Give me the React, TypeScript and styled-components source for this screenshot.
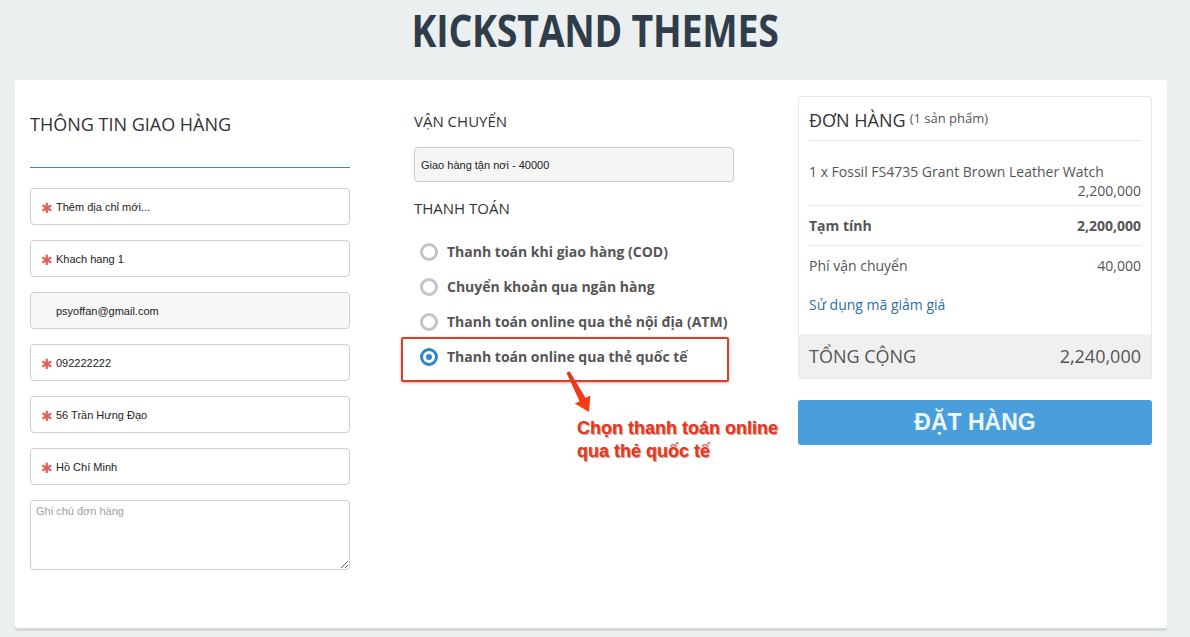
import React from "react";
import styled, { createGlobalStyle } from "styled-components";

const Global = createGlobalStyle`
  * { box-sizing: border-box; }
  html, body { margin: 0; padding: 0; background: #ebeff0; }
  body { font-family: "Open Sans", "Noto Sans", sans-serif; color: #333; }
`;

const Page = styled.div`
  width: 1190px;
  height: 637px;
  overflow: hidden;
`;

const Header = styled.header`
  height: 80px;
  display: flex;
  justify-content: center;
  align-items: flex-start;
`;

const Title = styled.h1`
  margin: 8px 0 0;
  font-family: "Open Sans", sans-serif;
  font-weight: 700;
  font-size: 44px;
  line-height: 44px;
  color: #2f3d4a;
  letter-spacing: -0.3px;
  white-space: nowrap;
  transform: scaleX(0.853);
`;

const Panel = styled.main`
  width: 1152px;
  min-height: 548px;
  margin-left: 15px;
  background: #fff;
  border-radius: 3px;
  box-shadow: 0 3px 0 #d3d9dc;
  display: grid;
  grid-template-columns: 320px 320px 354px;
  column-gap: 64px;
  padding: 0 15px;
  align-items: start;
`;

const Column = styled.section<{ $top: number }>`
  position: relative;
  padding-top: ${(p) => p.$top}px;
  display: flex;
  flex-direction: column;
`;

const BigHeading = styled.h2`
  margin: 0 0 20px;
  padding-bottom: 31px;
  font-size: 18px;
  line-height: 24px;
  font-weight: 400;
  color: #333;
  border-bottom: 1px solid #3f8aa3;
`;

const Field = styled.div<{ $muted?: boolean }>`
  height: 37px;
  margin-bottom: 15px;
  border: 1px solid #cfcfcf;
  border-radius: 4px;
  background: ${(p) => (p.$muted ? "#f8f8f8" : "#fff")};
  display: flex;
  align-items: center;
  padding-left: 10px;
  font-family: "Liberation Sans", Arial, sans-serif;
  font-size: 11px;
  color: #222;
`;

const Star = styled.span`
  width: 15px;
  color: #e0605a;
  font-family: "DejaVu Sans", sans-serif;
  font-size: 14px;
  font-weight: 400;
  line-height: 1;
  margin-top: 2px;
`;

const Note = styled.textarea`
  height: 70px;
  width: 100%;
  border: 1px solid #cfcfcf;
  border-radius: 4px;
  padding: 4px 5px;
  font-family: "Liberation Sans", Arial, sans-serif;
  font-size: 11px;
  color: #222;
  resize: vertical;
  outline: none;
  &::placeholder { color: #a0a0a0; }
`;

const SubHeading = styled.h3<{ $gap: number }>`
  margin: ${(p) => p.$gap}px 0 0;
  font-size: 15px;
  line-height: 22px;
  font-weight: 400;
  color: #333;
`;

const SelectBox = styled.div`
  margin-top: 15px;
  height: 35px;
  border: 1px solid #cccccc;
  border-radius: 4px;
  background: #f5f5f5;
  display: flex;
  align-items: center;
  padding-left: 6px;
  font-family: "Liberation Sans", Arial, sans-serif;
  font-size: 11px;
  color: #222;
`;

const RadioList = styled.ul`
  list-style: none;
  margin: 15px 0 0;
  padding: 0 0 0 6px;
`;

const RadioRow = styled.li`
  height: 35px;
  display: flex;
  align-items: center;
  gap: 9px;
  font-size: 14px;
  font-weight: 700;
  color: #555;
`;

const Radio = styled.span<{ $on?: boolean }>`
  width: 18px;
  height: 18px;
  border-radius: 50%;
  flex: none;
  border: 3px solid ${(p) => (p.$on ? "#2d86c8" : "#c4c4c4")};
  background: #fff;
  display: flex;
  align-items: center;
  justify-content: center;
  &::after {
    content: "";
    width: 6px;
    height: 6px;
    border-radius: 50%;
    background: ${(p) => (p.$on ? "#2d86c8" : "transparent")};
  }
`;

const Highlight = styled.div`
  position: absolute;
  left: -13px;
  top: 257px;
  width: 328px;
  height: 45px;
  border: 2px solid #d3412b;
  border-radius: 2px;
  box-shadow: 0 1px 3px rgba(120, 30, 10, 0.35);
  pointer-events: none;
`;

const Arrow = styled.svg`
  position: absolute;
  left: 150px;
  top: 288px;
`;

const Callout = styled.div`
  position: absolute;
  left: 163px;
  top: 337px;
  width: 260px;
  font-family: "Liberation Sans", Arial, sans-serif;
  font-weight: 700;
  font-size: 18px;
  line-height: 23px;
  color: #e8361e;
  text-shadow: 1px 1px 1px rgba(90, 20, 10, 0.45);
`;

const Card = styled.div`
  border: 1px solid #e8e8e8;
  border-radius: 3px;
  overflow: hidden;
  color: #555;
`;

const CardBody = styled.div`
  padding: 0 10px;
`;

const CardHead = styled.div`
  height: 44px;
  display: flex;
  align-items: center;
  gap: 4px;
  border-bottom: 1px solid #e8e8e8;
`;

const CardTitle = styled.span`
  font-size: 18px;
  color: #333;
  margin-top: 2px;
`;

const Count = styled.span`
  font-size: 13px;
  color: #555;
  margin-top: -2px;
`;

const Item = styled.div`
  padding: 21px 0 5px;
  font-size: 14px;
  line-height: 19px;
  border-bottom: 1px solid #e8e8e8;
`;

const Price = styled.div`
  text-align: right;
`;

const Line = styled.div<{ $bold?: boolean; $divider?: boolean }>`
  display: flex;
  justify-content: space-between;
  padding: 10px 0 ${(p) => (p.$divider ? 9 : 10)}px;
  font-size: 14px;
  line-height: 20px;
  font-weight: ${(p) => (p.$bold ? 700 : 400)};
  border-bottom: ${(p) => (p.$divider ? "1px solid #e8e8e8" : "none")};
`;

const CouponLink = styled.a`
  display: block;
  padding: 9px 0 19px;
  font-size: 14px;
  line-height: 20px;
  color: #2f6fa5;
  text-decoration: none;
`;

const Total = styled.div`
  height: 44px;
  background: #f0f0f0;
  display: flex;
  align-items: center;
  justify-content: space-between;
  padding: 0 10px;
  font-size: 18px;
  color: #555;
`;

const OrderButton = styled.button`
  margin-top: 21px;
  height: 45px;
  width: 100%;
  border: none;
  border-radius: 3px;
  background: #4a9edb;
  color: #eaf8ff;
  font-family: "Liberation Sans", Arial, sans-serif;
  font-weight: 700;
  font-size: 23px;
  cursor: pointer;
`;

const fields = [
  { star: true, text: "Thêm địa chỉ mới..." },
  { star: true, text: "Khach hang 1" },
  { star: false, text: "psyoffan@gmail.com", muted: true },
  { star: true, text: "092222222" },
  { star: true, text: "56 Trần Hưng Đạo" },
  { star: true, text: "Hồ Chí Minh" },
];

const payments = [
  "Thanh toán khi giao hàng (COD)",
  "Chuyển khoản qua ngân hàng",
  "Thanh toán online qua thẻ nội địa (ATM)",
  "Thanh toán online qua thẻ quốc tế",
];

export default function App() {
  return (
    <Page>
      <Global />
      <Header>
        <Title>KICKSTAND THEMES</Title>
      </Header>
      <Panel>
        <Column $top={32}>
          <BigHeading>THÔNG TIN GIAO HÀNG</BigHeading>
          {fields.map((f) => (
            <Field key={f.text} $muted={f.muted}>
              <Star>{f.star ? "✱" : ""}</Star>
              <span>{f.text}</span>
            </Field>
          ))}
          <Note placeholder="Ghi chú đơn hàng" />
        </Column>

        <Column $top={30}>
          <SubHeading $gap={0}>VẬN CHUYỂN</SubHeading>
          <SelectBox>Giao hàng tận nơi - 40000</SelectBox>
          <SubHeading $gap={15}>THANH TOÁN</SubHeading>
          <RadioList>
            {payments.map((p, i) => (
              <RadioRow key={p}>
                <Radio $on={i === 3} />
                {p}
              </RadioRow>
            ))}
          </RadioList>
          <Highlight />
          <Arrow width="40" height="50" viewBox="0 0 40 50">
            <defs>
              <linearGradient id="ag" x1="0" y1="0" x2="0" y2="1">
                <stop offset="0" stopColor="#d93a22" />
                <stop offset="1" stopColor="#ff3b12" />
              </linearGradient>
            </defs>
            <polygon
              points="5.6,3.2 21.6,30 26.4,27.6 25,44 10.8,35.6 15.6,33.2 2.4,4.8"
              fill="url(#ag)"
            />
          </Arrow>
          <Callout>
            Chọn thanh toán online
            <br />
            qua thẻ quốc tế
          </Callout>
        </Column>

        <Column $top={16}>
          <Card>
            <CardBody>
              <CardHead>
                <CardTitle>ĐƠN HÀNG</CardTitle>
                <Count>(1 sản phẩm)</Count>
              </CardHead>
              <Item>
                1 x Fossil FS4735 Grant Brown Leather Watch
                <Price>2,200,000</Price>
              </Item>
              <Line $bold $divider>
                <span>Tạm tính</span>
                <span>2,200,000</span>
              </Line>
              <Line>
                <span>Phí vận chuyển</span>
                <span>40,000</span>
              </Line>
              <CouponLink href="#">Sử dụng mã giảm giá</CouponLink>
            </CardBody>
            <Total>
              <span>TỔNG CỘNG</span>
              <span>2,240,000</span>
            </Total>
          </Card>
          <OrderButton>ĐẶT HÀNG</OrderButton>
        </Column>
      </Panel>
    </Page>
  );
}
